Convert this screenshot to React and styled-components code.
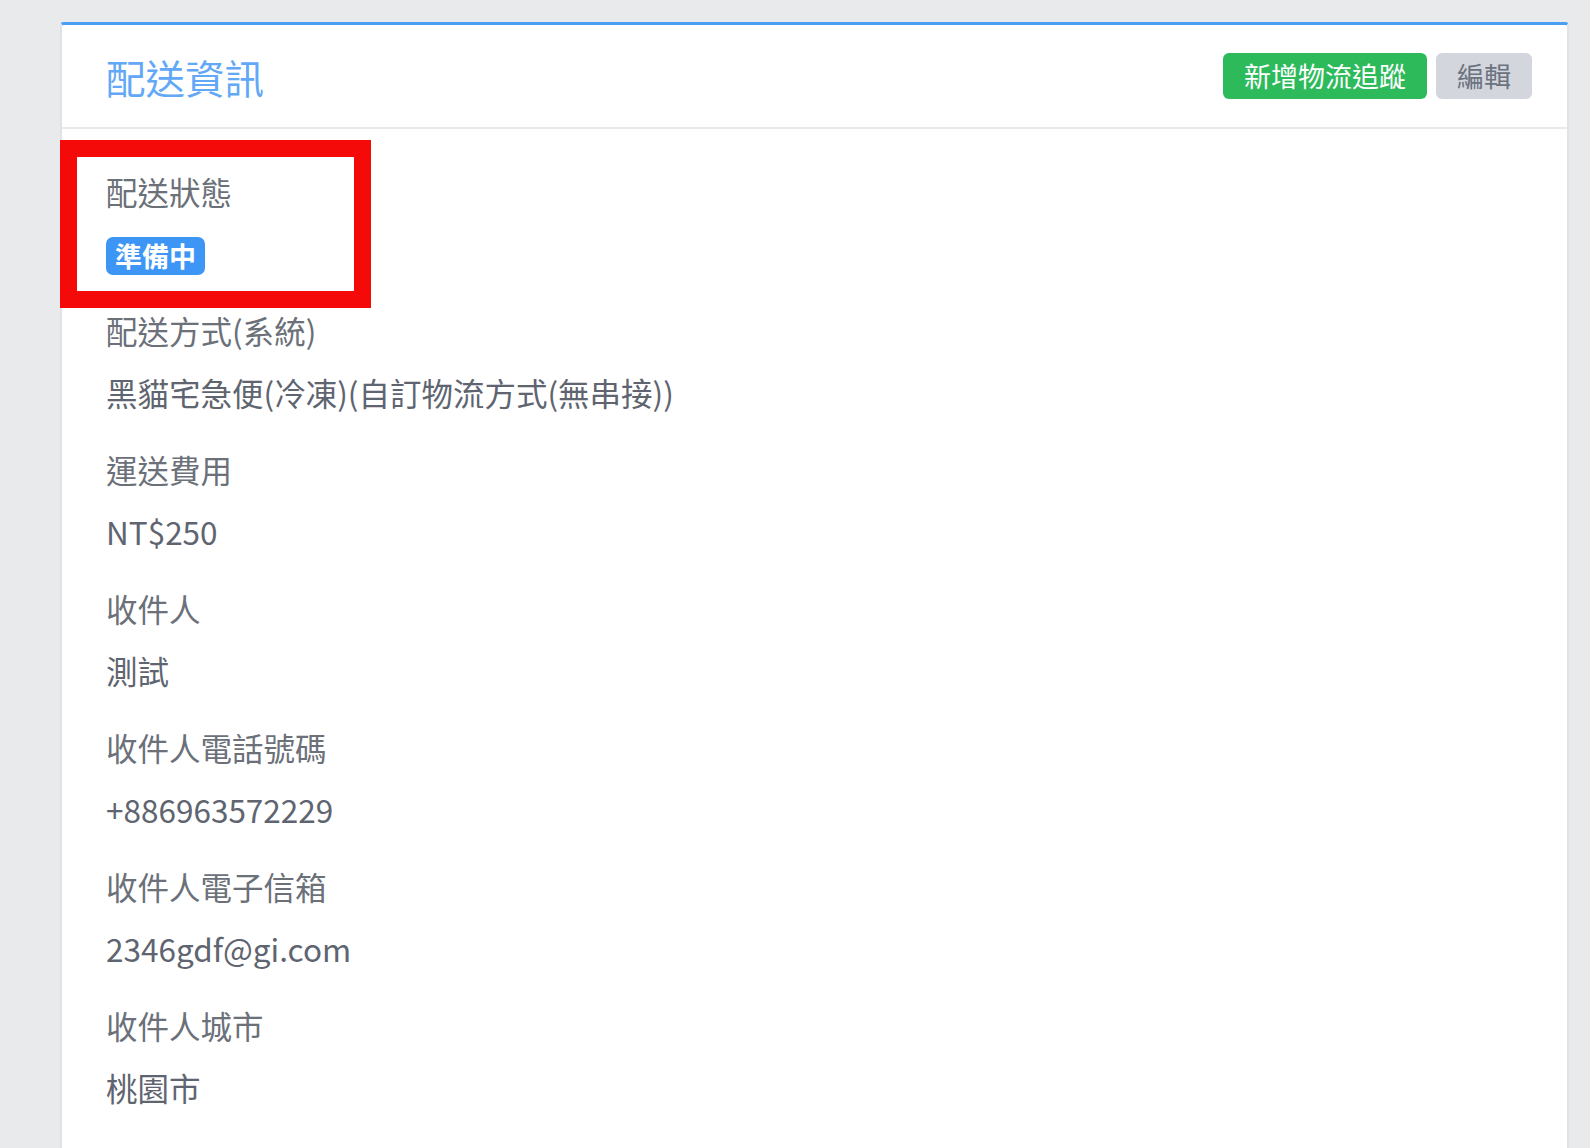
import styled, { createGlobalStyle } from 'styled-components';

const GlobalStyle = createGlobalStyle`
  html, body {
    margin: 0;
    padding: 0;
    background: #e9eaec;
    font-family: "Noto Sans CJK TC", "Noto Sans", sans-serif;
  }
`;

const fields = [
  { label: '配送方式(系統)', value: '黑貓宅急便(冷凍)(自訂物流方式(無串接))' },
  { label: '運送費用', value: 'NT$250' },
  { label: '收件人', value: '測試' },
  { label: '收件人電話號碼', value: '+886963572229' },
  { label: '收件人電子信箱', value: '2346gdf@gi.com' },
  { label: '收件人城市', value: '桃園市' },
];

function App() {
  return (
    <Page>
      <GlobalStyle />
      <Card>
        <Header>
          <Title>配送資訊</Title>
          <Actions>
            <Button $variant="green">新增物流追蹤</Button>
            <Button $variant="gray">編輯</Button>
          </Actions>
        </Header>
        <Body>
          <Field>
            <Label>配送狀態</Label>
            <Value>
              <Badge>準備中</Badge>
            </Value>
          </Field>
          {fields.map((f) => (
            <Field key={f.label}>
              <Label>{f.label}</Label>
              <Value>{f.value}</Value>
            </Field>
          ))}
        </Body>
        <Highlight />
      </Card>
    </Page>
  );
}

const Page = styled.div`
  padding: 22px 21px 0 60px;
  height: 1148px;
  box-sizing: border-box;
  overflow: hidden;
`;

const Card = styled.div`
  position: relative;
  background: #fff;
  border: 2px solid #dfe2e6;
  border-top: 3px solid #4a9ff5;
  border-bottom: none;
  border-radius: 4px 4px 0 0;
  min-height: 1200px;
`;

const Header = styled.div`
  display: flex;
  align-items: center;
  justify-content: space-between;
  height: 102px;
  padding: 0 35px 0 44px;
  border-bottom: 2px solid #e8eaed;
`;

const Title = styled.h2`
  margin: 0;
  font-size: 39.5px;
  font-weight: 400;
  color: #62a8f6;
`;

const Actions = styled.div`
  display: flex;
  gap: 9px;
`;

const Button = styled.button`
  height: 46px;
  padding: 0 21px;
  border: none;
  border-radius: 6px;
  font-family: inherit;
  font-size: 27px;
  line-height: 46px;
  background: ${(p) => (p.$variant === 'green' ? '#2dba5b' : '#d3d6dc')};
  color: ${(p) => (p.$variant === 'green' ? '#fff' : '#6b7280')};
  cursor: pointer;
`;

const Body = styled.div`
  padding: 41px 44px 0;
`;

const Field = styled.div`
  margin-bottom: 35px;
`;

const Label = styled.div`
  font-size: 31.5px;
  line-height: 42px;
  color: #6b7079;
  margin-bottom: 20px;
`;

const Value = styled.div`
  display: flex;
  align-items: center;
  height: 42px;
  font-size: 31.5px;
  line-height: 42px;
  color: #5f6570;
`;

const Badge = styled.span`
  display: inline-block;
  margin-top: 6px;
  background: #3d96f5;
  color: #fff;
  font-size: 27px;
  font-weight: 700;
  line-height: 38px;
  padding: 0 9px;
  border-radius: 7px;
`;

const Highlight = styled.div`
  position: absolute;
  left: -2px;
  top: 115px;
  width: 311px;
  height: 168px;
  box-sizing: border-box;
  border: 17px solid #f50a0a;
  pointer-events: none;
`;

export default App;
